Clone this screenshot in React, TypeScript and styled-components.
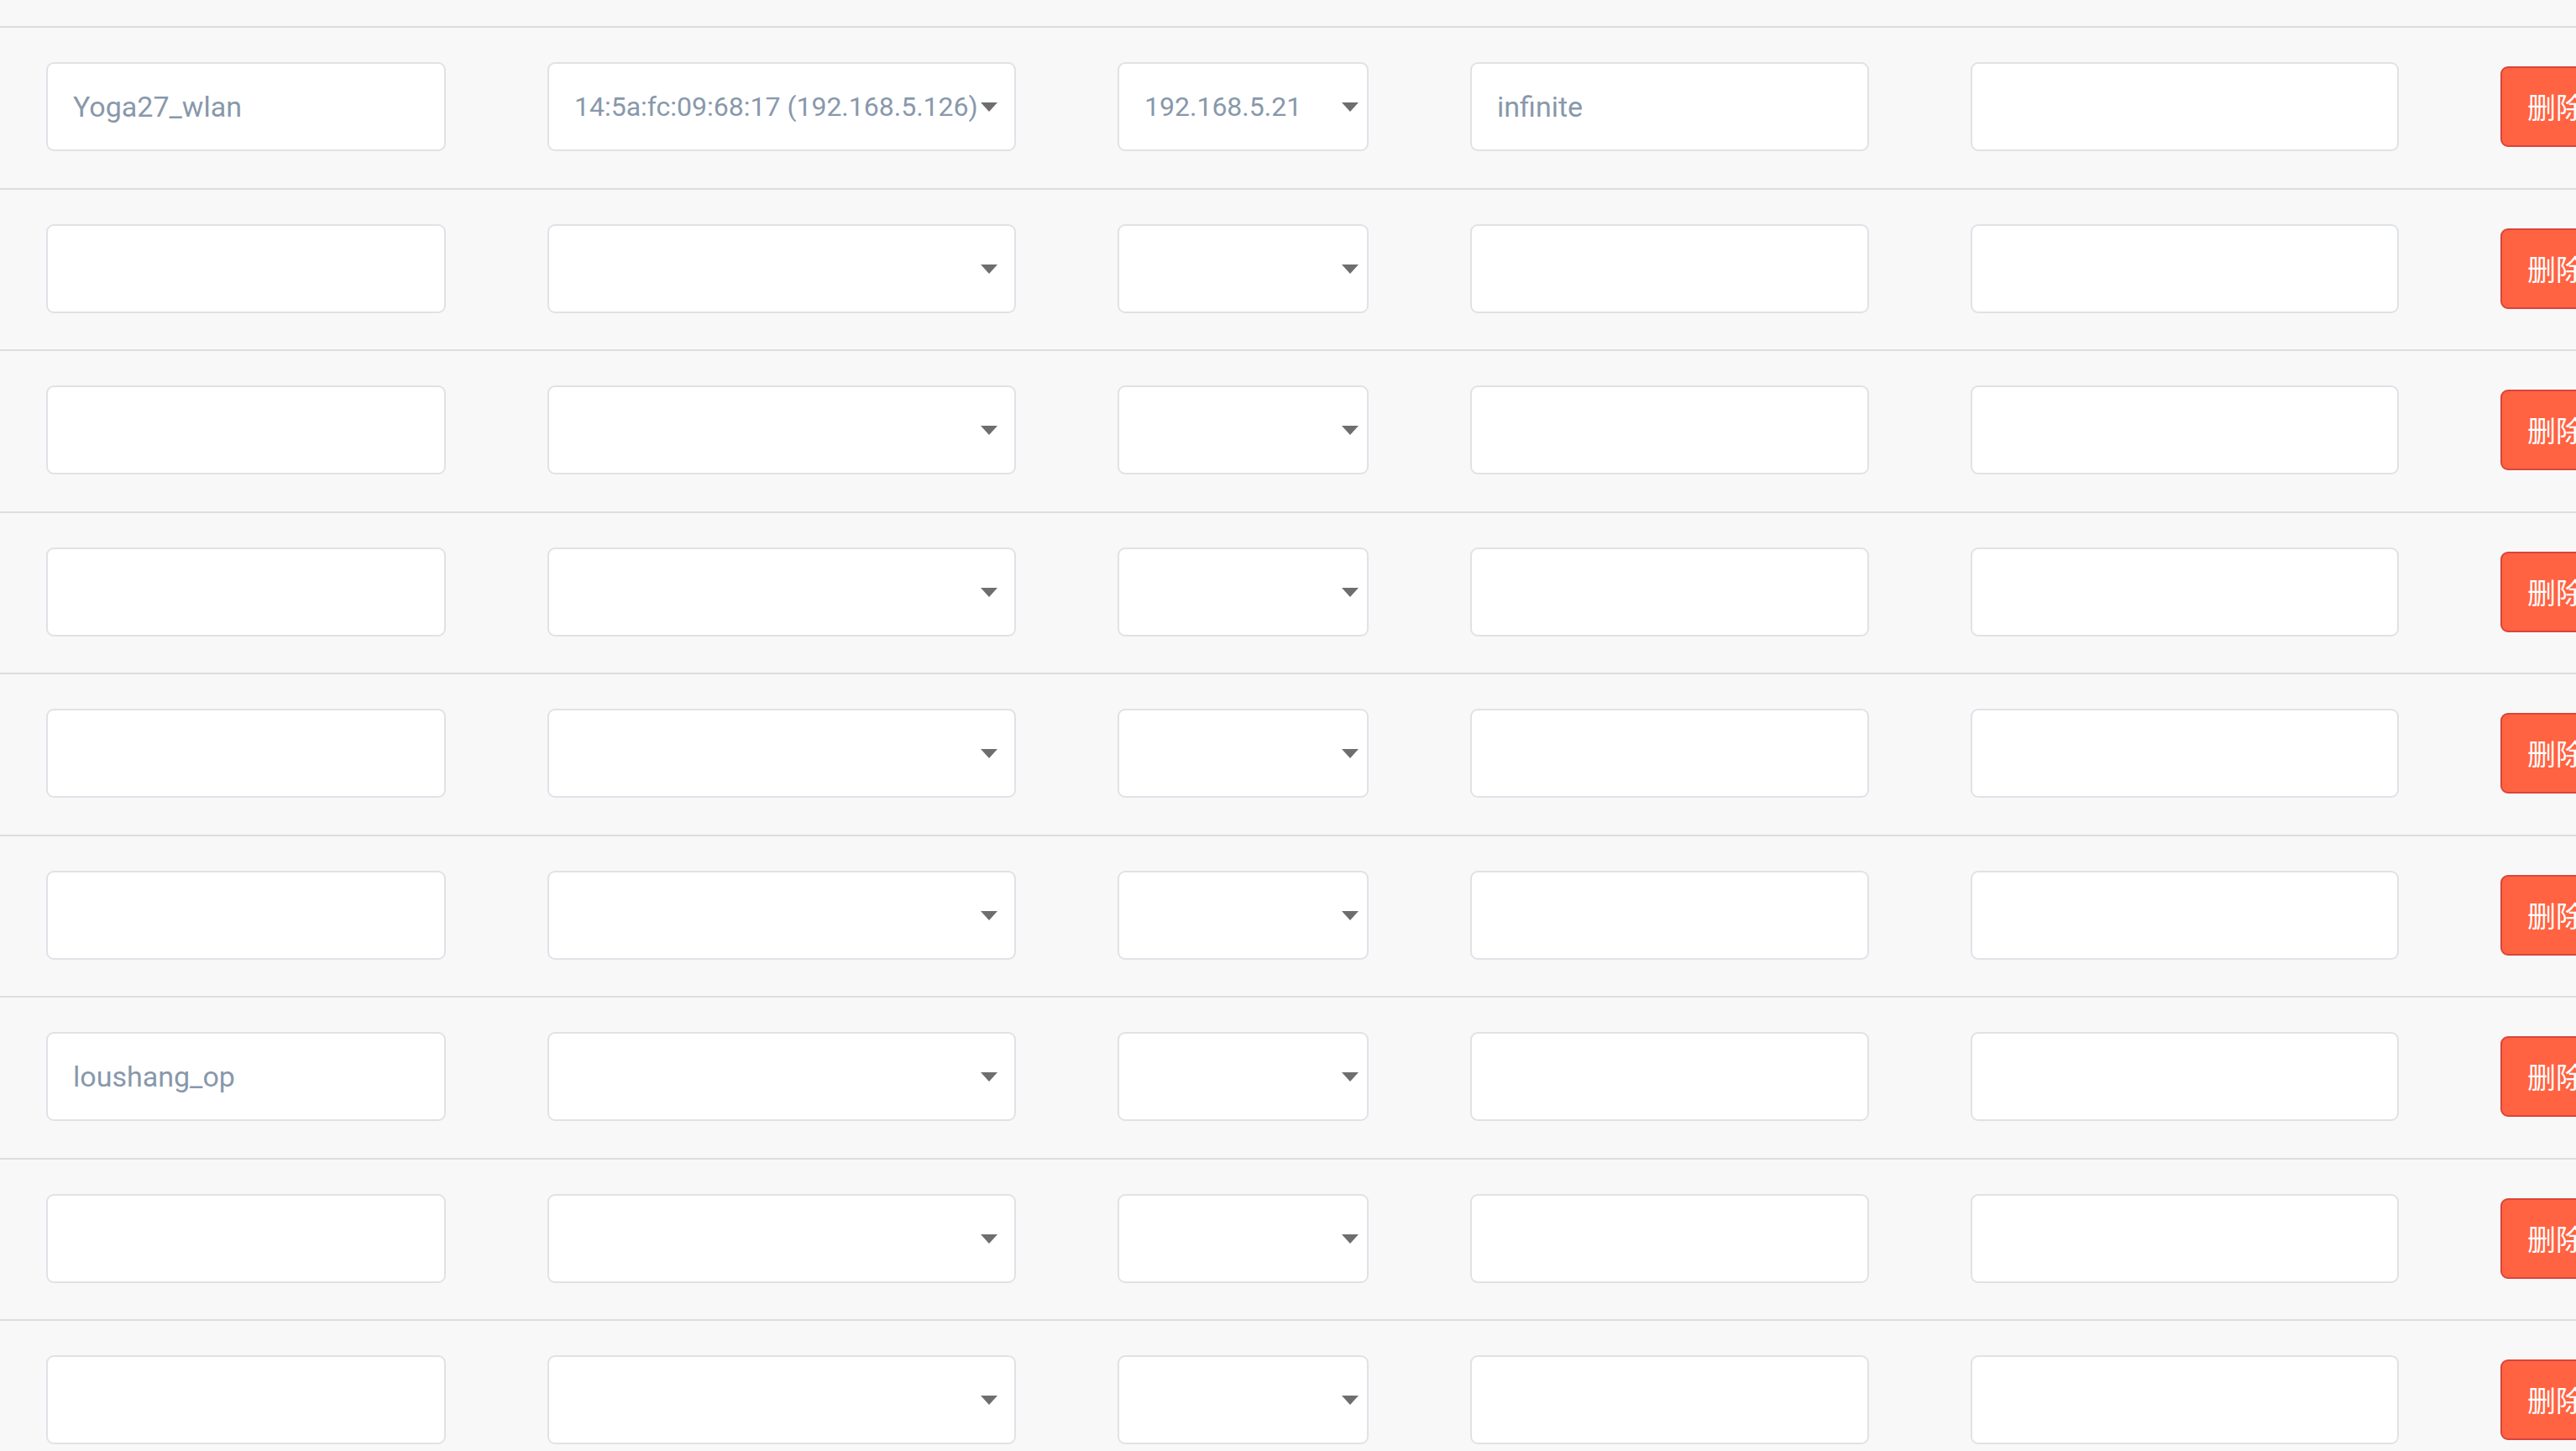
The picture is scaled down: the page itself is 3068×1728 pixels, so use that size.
import React from "react";
import styled, { createGlobalStyle } from "styled-components";

const GlobalStyle = createGlobalStyle`
  html, body {
    margin: 0;
    padding: 0;
    background: #f8f8f8;
    overflow: hidden;
    width: 3068px;
    height: 1728px;
  }
  * { box-sizing: border-box; }
`;

const Page = styled.div`
  width: 3068px;
  height: 1728px;
  background: #f8f8f8;
  font-family: Roboto, "Liberation Sans", "Noto Sans CJK SC", sans-serif;
  overflow: hidden;
`;

const TopStrip = styled.div`
  height: 31px;
`;

const Row = styled.div`
  display: grid;
  grid-template-columns: 476px 558px 299px 475px 510px max-content;
  column-gap: 121px;
  align-items: center;
  padding: 41px 0 43.5px 55px;
  border-top: 2px solid #dddddd;
  white-space: nowrap;
`;

const fieldBase = `
  height: 106px;
  width: 100%;
  border: 2px solid #dfe2e6;
  border-radius: 9px;
  background: #ffffff;
  color: #8898ab;
  font-family: Roboto, "Liberation Sans", sans-serif;
  outline: none;
  margin: 0;
`;

const TextField = styled.input`
  ${fieldBase}
  font-size: 34px;
  padding: 0 30px;
`;

const SelectWrap = styled.div`
  position: relative;
  width: 100%;
`;

const SelectField = styled.select`
  ${fieldBase}
  font-size: 32px;
  appearance: none;
  -webkit-appearance: none;
  padding: 0 30px;
  cursor: pointer;
`;

const Caret = styled.span<{ $right: number }>`
  position: absolute;
  top: 50%;
  right: ${(p) => p.$right}px;
  margin-top: -5px;
  width: 0;
  height: 0;
  border-left: 10px solid transparent;
  border-right: 10px solid transparent;
  border-top: 11px solid #6e6e6e;
  pointer-events: none;
`;

const DeleteButton = styled.button`
  height: 96px;
  padding: 0 30px;
  border: 2px solid #d8453b;
  border-radius: 9px;
  background: #ff6342;
  color: #ffffff;
  font-family: "Noto Sans CJK SC", "Liberation Sans", sans-serif;
  font-size: 34px;
  line-height: 1;
  cursor: pointer;
`;

type Lease = {
  name: string;
  mac: string;
  ip: string;
  time: string;
  extra: string;
};

const empty: Lease = { name: "", mac: "", ip: "", time: "", extra: "" };

const rows: Lease[] = [
  {
    name: "Yoga27_wlan",
    mac: "14:5a:fc:09:68:17 (192.168.5.126)",
    ip: "192.168.5.21",
    time: "infinite",
    extra: "",
  },
  empty,
  empty,
  empty,
  empty,
  empty,
  { ...empty, name: "loushang_op" },
  empty,
  empty,
];

function Select({ value, caretRight }: { value: string; caretRight: number }) {
  return (
    <SelectWrap>
      <SelectField defaultValue={value}>
        <option value={value}>{value}</option>
      </SelectField>
      <Caret $right={caretRight} />
    </SelectWrap>
  );
}

export default function App() {
  return (
    <Page>
      <GlobalStyle />
      <TopStrip />
      {rows.map((r, i) => (
        <Row key={i}>
          <TextField defaultValue={r.name} />
          <Select value={r.mac} caretRight={22} />
          <Select value={r.ip} caretRight={12} />
          <TextField defaultValue={r.time} />
          <TextField defaultValue={r.extra} />
          <DeleteButton>删除</DeleteButton>
        </Row>
      ))}
    </Page>
  );
}
